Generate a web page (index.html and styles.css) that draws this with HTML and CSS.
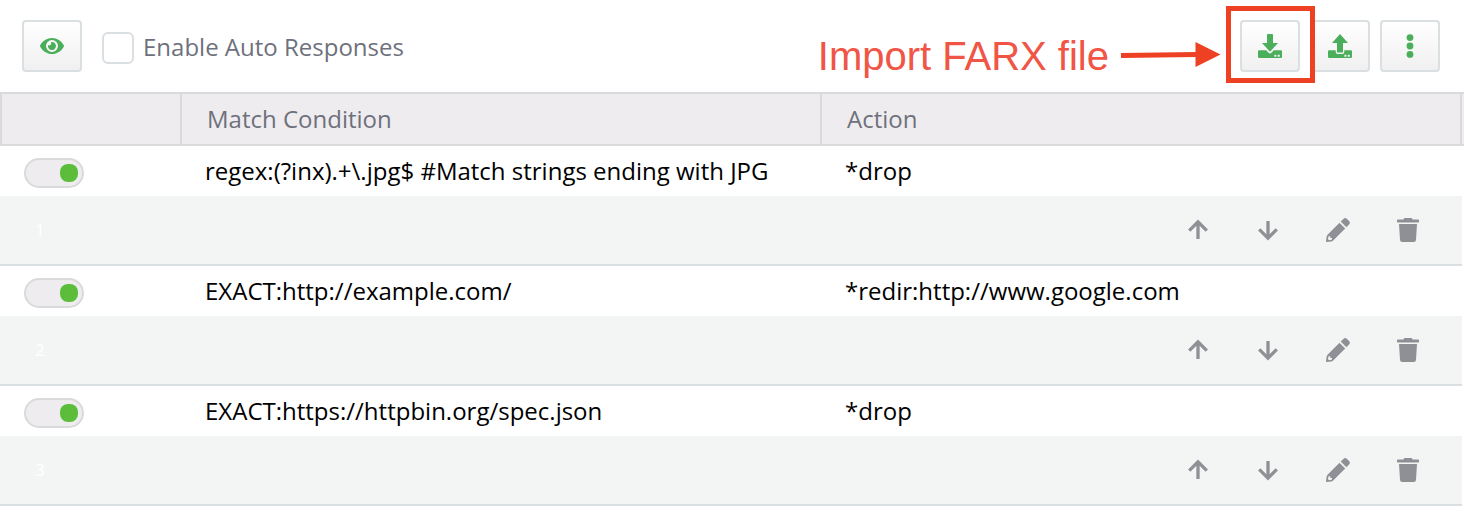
FILE: index.html
```html
<!DOCTYPE html>
<html lang="en">
<head>
<meta charset="utf-8">
<title>Auto Responses</title>
<link rel="stylesheet" href="styles.css">
</head>
<body>
<svg class="defs" aria-hidden="true">
  <symbol id="up" viewBox="0 0 24 24"><path d="M12 21V4M3.200 12.600L12 3.900l8.800 8.700" fill="none" stroke="currentColor" stroke-width="3.300"/></symbol>
  <symbol id="down" viewBox="0 0 24 24"><path d="M12 3v17M3.200 11.400L12 20.100l8.800-8.700" fill="none" stroke="currentColor" stroke-width="3.300"/></symbol>
  <symbol id="pencil" viewBox="0 0 24 24"><path fill="currentColor" fill-rule="evenodd" d="M13.500 4.800L19.200 10.500 7.700 22Q6.500 23.200 5.500 23.400L.5 24Q0 24 0 23.500L.6 18.500Q.8 17.500 2 16.300zM2.700 18.200L1.900 20.900 3.200 22.200 6 21.500V19.900H4.300V18.200z"/><path fill="currentColor" d="M14.700 3.600L17.400.9Q19.200-.7 21 .9L23.100 3Q24.700 4.800 23.100 6.600L20.400 9.300z"/></symbol>
  <symbol id="trash" viewBox="0 0 24 24"><path fill="currentColor" d="M1.800 1.600h5.600L8.200 0h7.600l.8 1.600h5.600q.8 0 .8.8v1.400q0 .6-.8.6H1.800q-.8 0-.8-.6V2.400q0-.8.8-.8zM3 6h18l-1 16q-.2 2-2.200 2H6.200Q4.200 24 4 22z"/></symbol>
</svg>
<header class="toolbar">
  <button class="btn" aria-label="Preview"><svg class="icon" viewBox="0 0 24 24"><path fill="currentColor" fill-rule="evenodd" d="M.2 11.300C2.600 7 7 4 12 4s9.400 3 11.800 7.300q.3.700 0 1.400C21.400 17 17 20 12 20S2.600 17 .2 12.700q-.3-.7 0-1.400zM12 6a6 6 0 1 0 0 12 6 6 0 0 0 0-12z"/><path fill="currentColor" d="M12 8a4 4 0 1 1-3.900 3 2 2 0 0 0 2.800-2.800Q11.400 8 12 8z"/></svg></button>
  <label class="check"><span class="box"></span><span class="label">Enable Auto Responses</span></label>
  <div class="note">
    <span class="note-text">Import FARX file</span>
    <svg class="arrow" viewBox="0 0 102 28"><path d="M2 15.500l76-1" stroke="#ee4023" stroke-width="5"/><path d="M76.500 2L101.500 14.500l-25 12.500z" fill="#ee4023"/></svg>
  </div>
  <div class="actions">
    <button class="btn marked" aria-label="Import"><svg class="icon" viewBox="0 0 24 24"><path fill="currentColor" d="M9.800 0h4.400q.8 0 .8.800V9h5l-8 8.700L4 9h5V.8q0-.8.800-.8z"/><path fill="currentColor" fill-rule="evenodd" d="M1.200 16.200h7l2.300 2.500q1.500 1.400 3 0l2.300-2.500h7q1.200 0 1.200 1.200v5.400q0 1.200-1.200 1.200H1.200Q0 24 0 22.800v-5.400q0-1.200 1.200-1.200zM16.400 20.700v2h2v-2zM19.700 20.700v2h2v-2z"/></svg></button>
    <button class="btn" aria-label="Export"><svg class="icon" viewBox="0 0 24 24"><path fill="currentColor" d="M9 18V9H4l8-9 8 9h-5v9q0 .6-.6.6H9.600Q9 18.600 9 18z"/><path fill="currentColor" fill-rule="evenodd" d="M1.200 16.200h6.500V18q0 2 2 2h4.600q2 0 2-2v-1.800h6.500q1.200 0 1.200 1.200v5.400q0 1.200-1.200 1.200H1.200Q0 24 0 22.800v-5.400q0-1.200 1.200-1.200zM16.400 20.700v2h2v-2zM19.700 20.700v2h2v-2z"/></svg></button>
    <button class="btn" aria-label="More"><svg class="icon" viewBox="0 0 24 24" fill="currentColor"><circle cx="12" cy="3.600" r="3.400"/><circle cx="12" cy="12" r="3.400"/><circle cx="12" cy="20.400" r="3.400"/></svg></button>
  </div>
</header>
<main class="table">
  <div class="head"><div></div><div>Match Condition</div><div>Action</div><div></div></div>
  <section class="rule">
    <div class="line"><span class="toggle"></span><span>regex:(?inx).+\.jpg$ #Match strings ending with JPG</span><span>*drop</span></div>
    <div class="tools"><span class="num">1</span><svg class="icon"><use href="#up"/></svg><svg class="icon"><use href="#down"/></svg><svg class="icon"><use href="#pencil"/></svg><svg class="icon"><use href="#trash"/></svg></div>
  </section>
  <section class="rule">
    <div class="line"><span class="toggle"></span><span>EXACT:http://example.com/</span><span>*redir:http://www.google.com</span></div>
    <div class="tools"><span class="num">2</span><svg class="icon"><use href="#up"/></svg><svg class="icon"><use href="#down"/></svg><svg class="icon"><use href="#pencil"/></svg><svg class="icon"><use href="#trash"/></svg></div>
  </section>
  <section class="rule">
    <div class="line"><span class="toggle"></span><span>EXACT:https://httpbin.org/spec.json</span><span>*drop</span></div>
    <div class="tools"><span class="num">3</span><svg class="icon"><use href="#up"/></svg><svg class="icon"><use href="#down"/></svg><svg class="icon"><use href="#pencil"/></svg><svg class="icon"><use href="#trash"/></svg></div>
  </section>
</main>
</body>
</html>
```
FILE: styles.css
```css
* { box-sizing: border-box; }
body { margin: 0; background: #fff; color: #000; font: 24px/34px "Open Sans", sans-serif; overflow: hidden; }
.defs { display: none; }
.icon { display: block; width: 24px; height: 24px; flex: none; }
.toolbar { display: flex; align-items: flex-start; height: 92px; padding: 20px 24px 0 22px; }
.btn { position: relative; display: flex; align-items: center; justify-content: center; width: 60px; height: 52px; padding: 0; border: 2px solid #dadfe2; border-radius: 4px; background: linear-gradient(#fff, #f0f0f0); color: #4bae5a; }
.check { display: flex; align-items: center; gap: 9px; height: 32px; margin: 12px 0 0 20px; color: #6e717c; white-space: nowrap; }
.label { padding-bottom: 2px; }
.box { width: 32px; height: 32px; border: 2px solid #dadfe2; border-radius: 6px; background: #fff; }
.note { display: flex; margin-left: auto; padding-top: 13px; }
.note-text { font: 40px/46px "Liberation Sans", sans-serif; color: #f05545; white-space: nowrap; }
.arrow { width: 102px; height: 28px; margin: 7px 19px 0 10px; }
.actions { display: flex; gap: 10px; }
.marked { z-index: 1; }
.marked::after { content: ""; position: absolute; inset: -16px; right: -17px; bottom: -13px; border: 5px solid #ee4023; }
.head { display: grid; grid-template-columns: 180px 640px 640px 4px; height: 54px; border: solid #dadadd; border-width: 2px 0; background: #eeecef; color: #6e717c; }
.head div { border-left: 2px solid #dadadd; padding: 8px 25px; }
.head div:last-child { padding: 0; }
.rule { width: 1462px; height: 120px; border-bottom: 2px solid #dadfe2; }
.line { display: grid; grid-template-columns: 181px 640px 1fr; height: 50px; padding: 8px 0 0 24px; }
.toggle { position: relative; width: 60px; height: 30px; margin-top: 4px; border: 2px solid #dadadd; border-radius: 15px; background: #eeecef; }
.toggle::after { content: ""; position: absolute; top: 4px; right: 4px; width: 18px; height: 18px; border-radius: 8px; background: #5cbd3a; }
.tools { display: flex; align-items: center; gap: 46px; height: 68px; padding: 0 42px 0 35px; background: #f3f5f5; color: #8f9096; }
.num { flex: 1; color: #fff; font-size: 17px; }
```
